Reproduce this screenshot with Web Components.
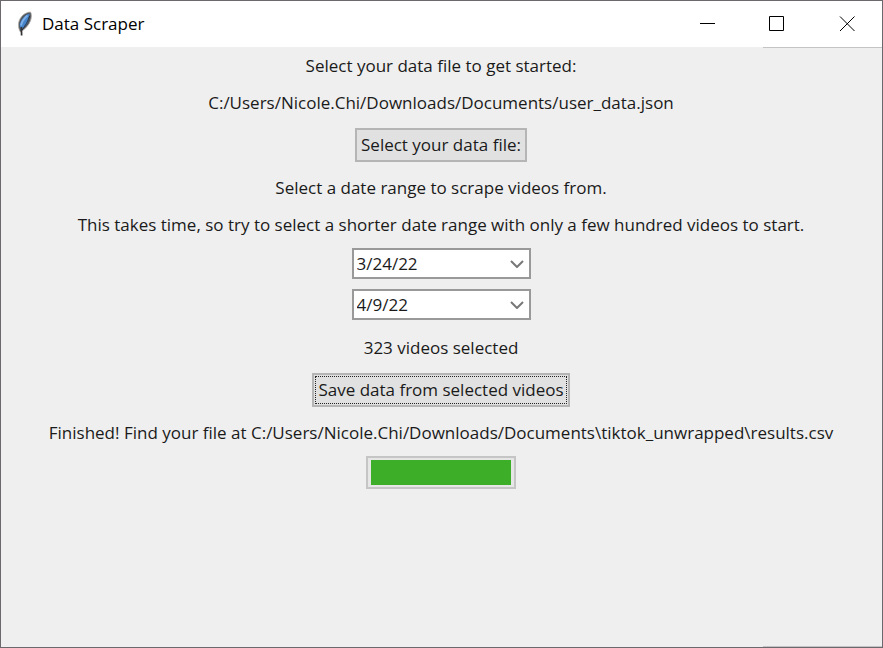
<!DOCTYPE html>
<html lang="en">
<head>
<meta charset="utf-8">
<title>Data Scraper</title>
<style>
html, body { height: 100%; margin: 0; }
body { font-family: "Open Sans", "Noto Sans", sans-serif; font-size: 17px; color: #1a1a1a; background: #efefef; }
</style>
</head>
<body>
<app-window>
  <title-bar slot="title">Data Scraper</title-bar>
  <text-line>Select your data file to get started:</text-line>
  <text-line>C:/Users/Nicole.Chi/Downloads/Documents/user_data.json</text-line>
  <push-button>Select your data file:</push-button>
  <text-line>Select a date range to scrape videos from.</text-line>
  <text-line>This takes time, so try to select a shorter date range with only a few hundred videos to start.</text-line>
  <date-range start="3/24/22" end="4/9/22"></date-range>
  <text-line>323 videos selected</text-line>
  <push-button current>Save data from selected videos</push-button>
  <text-line>Finished! Find your file at C:/Users/Nicole.Chi/Downloads/Documents\tiktok_unwrapped\results.csv</text-line>
  <task-progress value="100"></task-progress>
</app-window>
<script>
function define(name, html, setup) {
  const template = document.createElement('template');
  template.innerHTML = html;
  customElements.define(name, class extends HTMLElement {
    connectedCallback() {
      if (this.shadowRoot) return;
      this.attachShadow({ mode: 'open' }).append(template.content.cloneNode(true));
      if (setup) setup(this, this.shadowRoot);
    }
  });
}

define('app-window', `
<style>
:host { display: flex; flex-direction: column; min-height: 100%; box-sizing: border-box; border: 1px solid #6b696b; background: linear-gradient(#c4c4c4, #c4c4c4) right bottom / 119px 1px no-repeat #efefef; }
main { display: flex; flex-direction: column; align-items: center; gap: 10px; padding: 5px 9px 5px 8px; background: linear-gradient(#c4c4c4, #c4c4c4) right top / 119px 1px no-repeat; }
</style>
<slot name="title"></slot>
<main><slot></slot></main>`);

define('title-bar', `
<style>
:host { display: block; background: #fff; color: #000; }
header { display: flex; align-items: center; height: 46px; }
.logo { width: 16px; height: 26px; margin-left: 15px; }
h1 { flex: 1; margin: 0 0 0 10px; font: 17px/26px "Open Sans", "Noto Sans", sans-serif; }
button { display: grid; place-items: center; width: 70px; height: 46px; padding: 0; border: 0; background: none; color: #000; }
button svg { width: 16px; height: 16px; fill: none; stroke: currentColor; }
</style>
<header>
  <svg class="logo" viewBox="0 0 16 26" aria-hidden="true">
    <path d="M14.500 1C9 1.300 4.200 5.500 2.800 11c-.8 3.500-.2 7 1.600 10C9.500 18 13 14 14.600 9.500c1-3.500 1.100-6.300-.1-8.500z" fill="#50565e" stroke="#b0aca8" stroke-width=".8"/>
    <path d="M13.400 2.500C9 3.800 4.800 8.500 3.600 14l1.400 5C10 15.500 13.400 10.500 13.400 2.500z" fill="#4684cc"/>
    <path d="M11.500 4.500C8.500 7 6 10.500 5 14.500" fill="none" stroke="#7fb2ea" stroke-width="1.800"/>
    <path d="M13.600 5C12 10.500 9 15 6 19" fill="none" stroke="#202428" stroke-width=".8"/>
    <path d="M5.400 16l.2 8.500" fill="none" stroke="#333" stroke-width="1.700"/>
  </svg>
  <h1><slot></slot></h1>
  <button type="button" aria-label="Minimize"><svg viewBox="0 0 16 16"><path d="M1 7.500h15"/></svg></button>
  <button type="button" aria-label="Maximize"><svg viewBox="0 0 16 16"><path d="M.5.5h14v14H.5z"/></svg></button>
  <button type="button" aria-label="Close"><svg viewBox="0 0 16 16"><path d="M1 .5l14.500 14.500M15.500 .5L1 15"/></svg></button>
</header>`);

define('text-line', `
<style>
:host { display: block; min-height: 27px; line-height: 27px; text-align: center; }
</style>
<slot></slot>`);

define('push-button', `
<style>
:host { display: block; margin: 2px 0; }
button { display: block; box-sizing: border-box; height: 34px; padding: 1px; border: 2px solid #b5b5b5; background: #e1e1e1; color: inherit; font: inherit; line-height: 26px; }
span { display: block; padding: 0 2px; border: 1px dotted transparent; }
:host([current]) span { border-color: #222; }
</style>
<button type="button"><span><slot></slot></span></button>`);

define('date-range', `
<style>
:host { display: flex; flex-direction: column; gap: 10px; margin-bottom: 4px; }
label { display: grid; align-items: center; width: 179px; }
select, svg { grid-area: 1 / 1; }
select { appearance: none; box-sizing: border-box; width: 100%; height: 31px; padding: 0 3px; border: 2px solid #999; border-radius: 0; background: #fff; color: inherit; font: inherit; line-height: 27px; }
svg { justify-self: end; width: 14px; height: 8px; margin-right: 7px; fill: none; stroke: #787878; stroke-width: 2; pointer-events: none; }
</style>
<label><select class="start" aria-label="Start date"></select><svg viewBox="0 0 14 8"><path d="M1 1l6 6 6-6"/></svg></label>
<label><select class="end" aria-label="End date"></select><svg viewBox="0 0 14 8"><path d="M1 1l6 6 6-6"/></svg></label>`,
(host, root) => {
  for (const key of ['start', 'end']) root.querySelector('.' + key).add(new Option(host.getAttribute(key)));
});

define('task-progress', `
<style>
:host { display: block; }
progress { appearance: none; display: block; box-sizing: border-box; width: 150px; height: 33px; padding: 2px 3px; border: 2px solid #c5c5c5; background: #e6e6e6; }
progress::-webkit-progress-bar { background: #e6e6e6; }
progress::-webkit-progress-value { background: #3cae28; }
</style>
<progress max="100" aria-label="Scraping progress"></progress>`,
(host, root) => { root.querySelector('progress').value = Number(host.getAttribute('value')); });
</script>
</body>
</html>
